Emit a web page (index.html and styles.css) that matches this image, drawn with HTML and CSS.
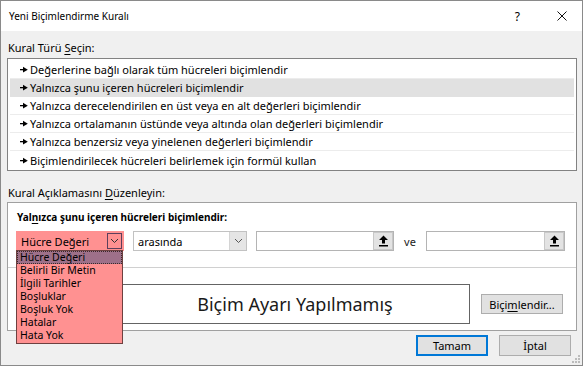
FILE: index.html
```html
<!DOCTYPE html>
<html>
<head>
  <link rel="stylesheet" href="styles.css">
</head>
<body>
  <div class="window">
    <div class="titlebar">
      <div class="title">Yeni Biçimlendirme Kuralı</div>
      <div class="title-help">?</div>
      <svg class="title-close" width="10" height="10" viewBox="0 0 10 10">
        <path d="M0.5 0.5L9.5 9.5M9.5 0.5L0.5 9.5" stroke="#111" stroke-width="1"/>
      </svg>
    </div>

    <div class="content">
      <div class="label">Kural Türü <u>S</u>eçin:</div>
      <div class="rule-list">
        <div class="rule-row"><span class="arrow"></span>Değerlerine bağlı olarak tüm hücreleri biçimlendir</div>
        <div class="rule-row selected"><span class="arrow"></span>Yalnızca şunu içeren hücreleri biçimlendir</div>
        <div class="rule-row"><span class="arrow"></span>Yalnızca derecelendirilen en üst veya en alt değerleri biçimlendir</div>
        <div class="rule-row"><span class="arrow"></span>Yalnızca ortalamanın üstünde veya altında olan değerleri biçimlendir</div>
        <div class="rule-row"><span class="arrow"></span>Yalnızca benzersiz veya yinelenen değerleri biçimlendir</div>
        <div class="rule-row"><span class="arrow"></span>Biçimlendirilecek hücreleri belirlemek için formül kullan</div>
      </div>

      <div class="label label-desc">Kural Açıklamasını <u>D</u>üzenleyin:</div>
      <div class="panel">
        <div class="panel-title">Yal<u>n</u>ızca şunu içeren hücreleri biçimlendir:</div>
        <div class="controls">
          <div class="combo combo-pink">
            <span class="combo-text">Hücre Değeri</span>
            <span class="combo-btn">
              <svg width="9" height="6" viewBox="0 0 9 6"><path d="M1 1L4.5 4.5L8 1" fill="none" stroke="#333" stroke-width="1"/></svg>
            </span>
            <div class="dropdown">
              <div class="dropdown-item active">Hücre Değeri</div>
              <div class="dropdown-item">Belirli Bir Metin</div>
              <div class="dropdown-item">İlgili Tarihler</div>
              <div class="dropdown-item">Boşluklar</div>
              <div class="dropdown-item">Boşluk Yok</div>
              <div class="dropdown-item">Hatalar</div>
              <div class="dropdown-item">Hata Yok</div>
            </div>
          </div>
          <div class="combo combo-op">
            <span class="combo-text">arasında</span>
            <span class="combo-btn">
              <svg width="9" height="6" viewBox="0 0 9 6"><path d="M1 1L4.5 4.5L8 1" fill="none" stroke="#555" stroke-width="1"/></svg>
            </span>
          </div>
          <div class="ref-input ref-first">
            <span class="ref-field"></span>
            <span class="ref-btn">
              <svg width="11" height="12" viewBox="0 0 11 12"><path d="M5.5 0.5L10 5H7V8.5H4V5H1Z" fill="#000"/><rect x="1" y="10" width="9" height="1.5" fill="#000"/></svg>
            </span>
          </div>
          <div class="ve">ve</div>
          <div class="ref-input ref-second">
            <span class="ref-field"></span>
            <span class="ref-btn">
              <svg width="11" height="12" viewBox="0 0 11 12"><path d="M5.5 0.5L10 5H7V8.5H4V5H1Z" fill="#000"/><rect x="1" y="10" width="9" height="1.5" fill="#000"/></svg>
            </span>
          </div>
        </div>
        <div class="divider"></div>
        <div class="preview-row">
          <div class="preview">Biçim Ayarı Yapılmamış</div>
          <button class="btn btn-format">Biçi<u>m</u>lendir...</button>
        </div>
      </div>

      <div class="footer">
        <button class="btn btn-default">Tamam</button>
        <button class="btn">İptal</button>
      </div>
    </div>

    <svg class="grip" width="8" height="8" viewBox="0 0 8 8">
      <rect x="6" y="0" width="2" height="2" fill="#bcbcbc"/>
      <rect x="3" y="3" width="2" height="2" fill="#bcbcbc"/>
      <rect x="6" y="3" width="2" height="2" fill="#bcbcbc"/>
      <rect x="0" y="6" width="2" height="2" fill="#bcbcbc"/>
      <rect x="3" y="6" width="2" height="2" fill="#bcbcbc"/>
      <rect x="6" y="6" width="2" height="2" fill="#bcbcbc"/>
    </svg>
  </div>
</body>
</html>
```

FILE: styles.css
```css
body {
  margin: 0;
  padding: 0;
  font-family: "Noto Sans", "DejaVu Sans", sans-serif;
  font-size: 11px;
  color: #000;
}
u {
  text-decoration-thickness: 1px;
  text-underline-offset: 2px;
}
.window {
  position: relative;
  width: 583px;
  height: 366px;
  box-sizing: border-box;
  border: 1px solid #8a8a8a;
  background: #f0f0f0;
  display: flex;
  flex-direction: column;
}
.titlebar {
  height: 30px;
  background: white;
  display: flex;
  align-items: center;
  padding-left: 8px;
  flex-shrink: 0;
}
.title {
  flex: 1;
  font-size: 10px;
}
.title-help {
  font-size: 12px;
  margin-right: 37px;
}
.title-close {
  margin-right: 15px;
}
.content {
  flex: 1;
  display: flex;
  flex-direction: column;
  padding: 9px 5px 0 6px;
}
.label {
  height: 16px;
  line-height: 16px;
  margin-bottom: 2px;
  padding-left: 1px;
}
.label-desc {
  margin-top: 14px;
  margin-bottom: 1px;
}
.rule-list {
  background: white;
  border: 1px solid #828282;
  padding: 2px 2px 1px 2px;
}
.rule-row {
  height: 18px;
  line-height: 17px;
  box-sizing: border-box;
  border-bottom: 1px solid #ececec;
  padding-left: 10px;
  display: flex;
  align-items: center;
  white-space: nowrap;
}
.rule-row:last-child {
  border-bottom: none;
}
.rule-row.selected {
  background: #e1e1e1;
  border-bottom-color: #e1e1e1;
}
.arrow {
  display: inline-block;
  width: 8px;
  height: 7px;
  margin-right: 2px;
  background: url("data:image/svg+xml,%3Csvg xmlns='http://www.w3.org/2000/svg' width='8' height='7' viewBox='0 0 8 7'%3E%3Crect x='0' y='3' width='3.5' height='1.3' fill='%23000'/%3E%3Cpath d='M3 0.8L7.8 3.65L3 6.5Z' fill='%23000'/%3E%3C/svg%3E") no-repeat;
}
.panel {
  background: white;
  border: 1px solid #a0a0a0;
  padding: 6px 0 6px 8px;
}
.panel-title {
  font-weight: bold;
  font-size: 10px;
  height: 16px;
  line-height: 16px;
  padding-left: 1px;
}
.controls {
  display: flex;
  align-items: center;
  margin-top: 6px;
  height: 20px;
}
.combo {
  position: relative;
  height: 20px;
  box-sizing: border-box;
  display: flex;
  align-items: center;
  justify-content: space-between;
}
.combo-text {
  padding-left: 4px;
}
.combo-pink {
  width: 108px;
  background: #ff9191;
  border: 1px solid #ff9191;
}
.combo-pink .combo-btn {
  width: 15px;
  height: 16px;
  margin-right: 1px;
  border: 1px solid #5c3f5c;
  background: #ff9191;
}
.combo-op {
  width: 114px;
  margin-left: 9px;
  background: white;
  border: 1px solid #c2c2c2;
}
.combo-op .combo-btn {
  width: 17px;
  height: 18px;
  background: #e5e5e5;
  border-left: 1px solid #d4d4d4;
}
.combo-btn {
  display: flex;
  align-items: center;
  justify-content: center;
  box-sizing: border-box;
}
.dropdown {
  position: absolute;
  left: -1px;
  top: 18px;
  width: 107px;
  box-sizing: border-box;
  background: #ff9191;
  border: 1px solid #6e4040;
  padding-bottom: 1px;
  z-index: 2;
}
.dropdown-item {
  height: 13px;
  line-height: 13px;
  font-size: 10.5px;
  padding-left: 3px;
  white-space: nowrap;
  overflow: hidden;
}
.dropdown-item.active {
  background: #9e7089;
  outline: 1px dotted #3a2a2a;
  outline-offset: -1px;
}
.ref-input {
  display: flex;
  height: 20px;
  box-sizing: border-box;
  border: 1px solid #b4b4b4;
  background: white;
}
.ref-first {
  margin-left: 9px;
  width: 138px;
}
.ref-second {
  width: 139px;
}
.ref-field {
  flex: 1;
}
.ref-btn {
  width: 20px;
  height: 18px;
  box-sizing: border-box;
  background: #e3e3e3;
  border: 1px solid #c8c8c8;
  display: flex;
  align-items: center;
  justify-content: center;
}
.ve {
  width: 32px;
  text-align: center;
  font-size: 11px;
  color: #222;
}
.divider {
  height: 1px;
  background: #d0d0d0;
  margin: 16px 0 16px -8px;
}
.preview-row {
  display: flex;
  align-items: center;
}
.preview {
  margin-left: 104px;
  width: 350px;
  height: 40px;
  box-sizing: border-box;
  border: 1px solid #646464;
  display: flex;
  align-items: center;
  justify-content: center;
  font-size: 18px;
  color: #1a1a1a;
}
.btn {
  font-family: inherit;
  font-size: 11px;
  color: #000;
  background: #e1e1e1;
  border: 1px solid #adadad;
  height: 21px;
  width: 72px;
  padding: 0;
  box-sizing: border-box;
}
.btn-format {
  margin-left: 11px;
  width: 82px;
  height: 20px;
}
.btn-default {
  border: 2px solid #0078d7;
}
.footer {
  display: flex;
  justify-content: flex-end;
  gap: 11px;
  margin-top: 4px;
  padding-right: 6px;
}
.grip {
  position: absolute;
  right: 2px;
  bottom: 2px;
}
```
